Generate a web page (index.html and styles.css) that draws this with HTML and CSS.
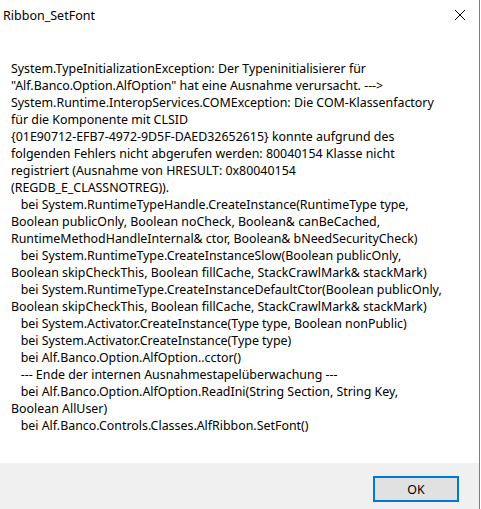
FILE: index.html
```html
<!DOCTYPE html>
<html>
<head>
<meta charset="utf-8">
<link rel="stylesheet" href="styles.css">
</head>
<body>
<div class="window">
  <div class="titlebar">
    <span class="title">Ribbon_SetFont</span>
    <span class="close">
      <svg width="12" height="12" viewBox="0 0 12 12"><path d="M1 1 L11 11 M11 1 L1 11" stroke="#000" stroke-width="1" fill="none"/></svg>
    </span>
  </div>
  <div class="content">
<p class="msg">System.TypeInitializationException: Der Typeninitialisierer für
"Alf.Banco.Option.AlfOption" hat eine Ausnahme verursacht. ---&gt;
System.Runtime.InteropServices.COMException: Die COM-Klassenfactory
für die Komponente mit CLSID
{01E90712-EFB7-4972-9D5F-DAED32652615} konnte aufgrund des
folgenden Fehlers nicht abgerufen werden: 80040154 Klasse nicht
registriert (Ausnahme von HRESULT: 0x80040154
(REGDB_E_CLASSNOTREG)).
   bei System.RuntimeTypeHandle.CreateInstance(RuntimeType type,
Boolean publicOnly, Boolean noCheck, Boolean&amp; canBeCached,
RuntimeMethodHandleInternal&amp; ctor, Boolean&amp; bNeedSecurityCheck)
   bei System.RuntimeType.CreateInstanceSlow(Boolean publicOnly,
Boolean skipCheckThis, Boolean fillCache, StackCrawlMark&amp; stackMark)
   bei System.RuntimeType.CreateInstanceDefaultCtor(Boolean publicOnly,
Boolean skipCheckThis, Boolean fillCache, StackCrawlMark&amp; stackMark)
   bei System.Activator.CreateInstance(Type type, Boolean nonPublic)
   bei System.Activator.CreateInstance(Type type)
   bei Alf.Banco.Option.AlfOption..cctor()
   --- Ende der internen Ausnahmestapelüberwachung ---
   bei Alf.Banco.Option.AlfOption.ReadIni(String Section, String Key,
Boolean AllUser)
   bei Alf.Banco.Controls.Classes.AlfRibbon.SetFont()</p>
  </div>
  <div class="footer">
    <button class="ok">OK</button>
  </div>
</div>
</body>
</html>
```

FILE: styles.css
```css
html, body {
  margin: 0;
  padding: 0;
  background: #ffffff;
}
body {
  font-family: "Segoe UI", "Noto Sans", "Open Sans", sans-serif;
  font-size: 12.4px;
  color: #000;
}
.window {
  width: 479px;
  height: 509px;
  border-right: 1px solid #7d7d7d;
  display: flex;
  flex-direction: column;
  background: #fff;
}
.titlebar {
  height: 30px;
  display: flex;
  align-items: center;
  justify-content: space-between;
  flex: none;
}
.title {
  padding-left: 3px;
  font-size: 12.5px;
}
.close {
  width: 38px;
  height: 30px;
  display: flex;
  align-items: center;
  justify-content: center;
}
.close svg { display: block; }
.content {
  flex: 1;
  padding: 30px 0 0 11px;
}
.msg {
  margin: 0;
  white-space: pre;
  line-height: 17px;
}
.footer {
  flex: none;
  height: 46px;
  background: #f0f0f0;
  display: flex;
  justify-content: flex-end;
  align-items: flex-start;
  padding: 13px 20px 0 0;
  box-sizing: border-box;
}
.ok {
  width: 86px;
  height: 26px;
  background: #e1e1e1;
  border: 2px solid #0078d7;
  box-sizing: border-box;
  font-family: inherit;
  font-size: 12.4px;
  color: #000;
  padding: 0;
  margin: 0;
}
```
